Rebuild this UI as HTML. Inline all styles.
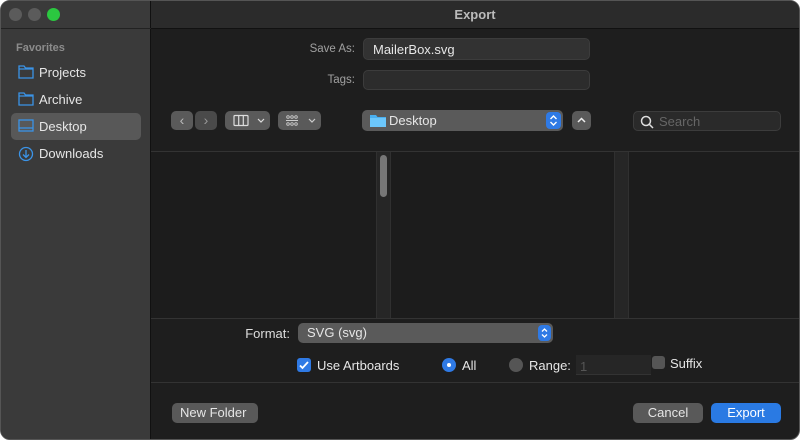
<!DOCTYPE html>
<html><head><style>
*{box-sizing:border-box;margin:0;padding:0}
body{width:800px;height:441px;background:#fff;font-family:"Liberation Sans",sans-serif;position:relative;overflow:hidden;color:#ddd}
.win{position:absolute;left:0;top:0;width:800px;height:440px;border-radius:10px;overflow:hidden;background:#1e1e1e;border:1px solid #555}
.abs{position:absolute}
.side{left:0;top:0;width:150px;height:440px;background:#3a3a3a;border-right:1px solid #111}
.dot{width:13px;height:13px;border-radius:50%;top:7px}
.tb{left:150px;top:0;right:0;height:28px;background:#2b2b2b;border-bottom:1px solid #111;text-align:center;font-size:13px;font-weight:bold;line-height:27px;color:#bbb}
.item{left:10px;width:130px;height:27px;font-size:13px;line-height:27px;padding-left:28px;color:#e6e6e6;border-radius:5px}
.lbl{font-size:11.5px;color:#a0a0a0;text-align:right}
.field{background:#2c2c2c;border:1px solid #3c3c3c;border-radius:5px}
.btn{background:#5a5a5a;border-radius:5px}
.txt{font-size:13px;color:#e6e6e6}
</style></head><body>
<div class="win">
<div class="abs side"></div>
<div class="abs dot" style="left:8px;background:#5b5b5b"></div>
<div class="abs dot" style="left:27px;background:#5b5b5b"></div>
<div class="abs dot" style="left:46px;background:#2bc840"></div>
<div class="abs" style="left:0;top:27px;width:150px;height:1px;background:#222"></div>
<div class="abs tb">Export</div>
<div class="abs" style="left:15px;top:41px;font-size:11px;color:#8c8c8c;font-weight:bold">Favorites</div>
<div class="abs item" style="top:58px">Projects</div>
<div class="abs item" style="top:85px">Archive</div>
<div class="abs item" style="top:112px;background:#585858">Desktop</div>
<div class="abs item" style="top:139px">Downloads</div>
<svg class="abs" style="left:17px;top:63px" width="16" height="100" fill="none" stroke="#3b94e8" stroke-width="1.3">
<path d="M1 2h5l1.5 2H15v10H1z M1 5h14"/>
<path d="M1 29h5l1.5 2H15v10H1z M1 32h14"/>
<rect x="1" y="56" width="14" height="11"/><path d="M1 64h14"/>
<circle cx="8" cy="90" r="6.5"/><path d="M8 86v7M5 90.5l3 3 3-3"/>
</svg>
<div class="abs lbl" style="left:290px;top:42px;width:64px">Save As:</div>
<div class="abs field" style="left:362px;top:37px;width:227px;height:22px;background:#323232"><span class="txt" style="position:absolute;left:9px;top:3px">MailerBox.svg</span></div>
<div class="abs lbl" style="left:290px;top:73px;width:64px">Tags:</div>
<div class="abs field" style="left:362px;top:69px;width:227px;height:20px"></div>
<div class="abs btn" style="left:170px;top:110px;width:22px;height:19px;font-size:14px;color:#bbb;text-align:center;line-height:18px">‹</div>
<div class="abs btn" style="left:194px;top:110px;width:22px;height:19px;font-size:14px;color:#999;text-align:center;line-height:18px;background:#4a4a4a">›</div>
<div class="abs btn" style="left:224px;top:110px;width:45px;height:19px"><svg width="45" height="19" fill="none" stroke="#ddd" stroke-width="1.2"><rect x="9" y="4.5" width="14" height="10" rx="1"/><path d="M13.7 4.5v10M18.3 4.5v10M33 8l3 3 3-3"/></svg></div>
<div class="abs btn" style="left:277px;top:110px;width:43px;height:19px"><svg width="43" height="19" fill="none" stroke="#ccc" stroke-width="0.9"><circle cx="10" cy="6" r="1.3"/><circle cx="14" cy="6" r="1.3"/><circle cx="18" cy="6" r="1.3"/><path d="M8 9.5h12"/><circle cx="10" cy="13" r="1.3"/><circle cx="14" cy="13" r="1.3"/><circle cx="18" cy="13" r="1.3"/><path d="M31 8l3 3 3-3" stroke-width="1.2"/></svg></div>
<div class="abs btn" style="left:361px;top:109px;width:201px;height:21px"><svg class="abs" style="left:8px;top:4px" width="16" height="13"><path d="M0 1h6l1.5 2H16v10H0z" fill="#4ab0f0"/><path d="M0 4h16v9H0z" fill="#6cc7fb"/></svg><span class="txt" style="position:absolute;left:27px;top:3px">Desktop</span><div class="abs" style="right:2px;top:2px;width:15px;height:17px;background:#2f7ae5;border-radius:4px"><svg width="15" height="17" fill="none" stroke="#fff" stroke-width="1.4"><path d="M4.5 7l3-3 3 3M4.5 10l3 3 3-3"/></svg></div></div>
<div class="abs btn" style="left:571px;top:110px;width:19px;height:19px"><svg width="19" height="19" fill="none" stroke="#eee" stroke-width="1.5"><path d="M6 11l3.5-3.5L13 11"/></svg></div>
<div class="abs field" style="left:632px;top:110px;width:148px;height:20px;background:#2a2a2a"><svg class="abs" style="left:6px;top:3px" width="14" height="14" fill="none" stroke="#ddd" stroke-width="1.5"><circle cx="6" cy="6" r="4.5"/><path d="M9.5 9.5l3.5 3.5"/></svg><span style="position:absolute;left:25px;top:2px;font-size:13px;color:#666">Search</span></div>
<div class="abs" style="left:150px;top:150px;right:0;height:168px;background:#1c1c1c;border-top:1px solid #333;border-bottom:1px solid #333"></div>
<div class="abs" style="left:375px;top:151px;width:15px;height:166px;background:#262626;border-left:1px solid #303030;border-right:1px solid #303030"></div>
<div class="abs" style="left:379px;top:154px;width:7px;height:42px;background:#777;border-radius:4px"></div>
<div class="abs" style="left:613px;top:151px;width:15px;height:166px;background:#262626;border-left:1px solid #303030;border-right:1px solid #303030"></div>
<div class="abs" style="left:150px;top:381px;right:0;height:1px;background:#333"></div>
<div class="abs" style="left:150px;top:325px;width:139px;text-align:right;font-size:13px;color:#ddd">Format:</div>
<div class="abs btn" style="left:297px;top:322px;width:255px;height:20px"><span class="txt" style="position:absolute;left:9px;top:2px">SVG (svg)</span><div class="abs" style="right:2px;top:2px;width:13px;height:16px;background:#2f7ae5;border-radius:4px"><svg width="13" height="16" fill="none" stroke="#fff" stroke-width="1.3"><path d="M4 6.5l2.5-2.5 2.5 2.5M4 9.5l2.5 2.5 2.5-2.5"/></svg></div></div>
<div class="abs" style="left:296px;top:357px;width:14px;height:14px;background:#2f7ae5;border-radius:3px"><svg width="14" height="14" fill="none" stroke="#fff" stroke-width="1.8"><path d="M3 7.5l2.5 2.5L11 4"/></svg></div>
<div class="abs txt" style="left:316px;top:357px">Use Artboards</div>
<div class="abs" style="left:441px;top:357px;width:14px;height:14px;background:#2f7ae5;border-radius:50%"><div class="abs" style="left:5px;top:5px;width:4px;height:4px;background:#fff;border-radius:50%"></div></div>
<div class="abs txt" style="left:461px;top:357px">All</div>
<div class="abs" style="left:508px;top:357px;width:14px;height:14px;background:#555;border-radius:50%"></div>
<div class="abs txt" style="left:528px;top:357px">Range:</div>
<div class="abs" style="left:575px;top:354px;width:75px;height:20px;background:#262626;border-bottom:1px solid #333"><span style="position:absolute;left:4px;top:4px;font-size:13px;color:#555">1</span></div>
<div class="abs" style="left:651px;top:355px;width:13px;height:13px;background:#555;border-radius:3px"></div>
<div class="abs txt" style="left:669px;top:355px">Suffix</div>
<div class="abs btn" style="left:171px;top:402px;width:86px;height:20px;background:#595959"><span class="txt" style="position:absolute;left:8px;top:2px">New Folder</span></div>
<div class="abs btn" style="left:632px;top:402px;width:70px;height:20px;background:#595959;text-align:center"><span class="txt" style="line-height:19px">Cancel</span></div>
<div class="abs" style="left:710px;top:402px;width:70px;height:20px;background:#2a7ae3;border-radius:5px;text-align:center"><span class="txt" style="line-height:19px;color:#fff">Export</span></div>
</div>
</body></html>
